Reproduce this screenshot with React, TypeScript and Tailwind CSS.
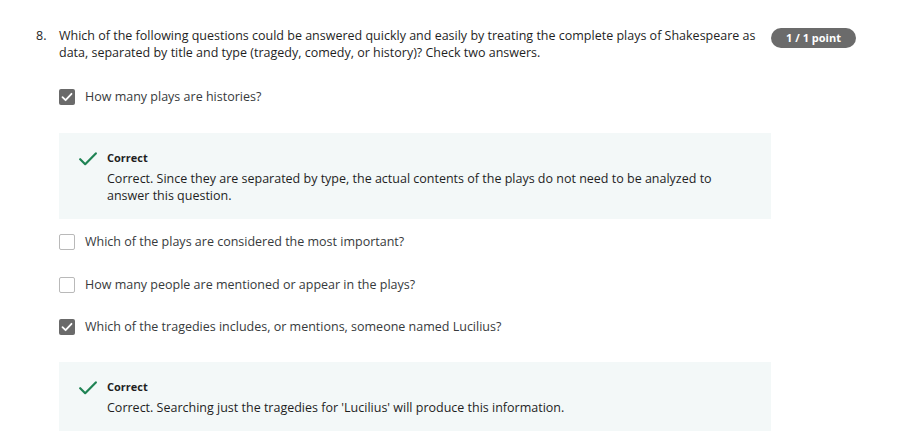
import React from 'react';

const font = { fontFamily: '"Open Sans", "Noto Sans", sans-serif' };

const CheckBox = ({ checked }: { checked: boolean }) =>
  checked ? (
    <span className="flex h-4 w-4 shrink-0 items-center justify-center rounded-[2px] bg-[#6a6a6a]">
      <svg width="12" height="10" viewBox="0 0 12 10" fill="none">
        <path d="M1.5 5.2 L4.6 8.2 L10.5 1.8" stroke="#fff" strokeWidth="1.8" strokeLinecap="round" strokeLinejoin="round" />
      </svg>
    </span>
  ) : (
    <span className="h-4 w-4 shrink-0 rounded-[2px] border border-[#b9b9b9] bg-white" />
  );

const Option = ({ checked, text, className }: { checked: boolean; text: string; className?: string }) => (
  <div className={`flex items-center gap-[10px] ${className ?? ''}`}>
    <CheckBox checked={checked} />
    <span className="text-[12.5px] leading-[18px] text-[#373a3c]">{text}</span>
  </div>
);

const Feedback = ({ lines, className }: { lines: string; className?: string }) => (
  <div className={`flex w-[712px] bg-[#f3f8f8] pl-5 ${className ?? ''}`}>
    <svg className="mt-[2px] shrink-0" width="18" height="14" viewBox="0 0 18 14" fill="none">
      <path d="M1.2 7.2 L6.2 12.2 L16.8 1.4" stroke="#1f8354" strokeWidth="2.2" strokeLinecap="round" strokeLinejoin="round" />
    </svg>
    <div className="ml-[10px] w-[620px]">
      <p className="text-[11px] font-bold leading-[15px] text-[#1f1f1f]">Correct</p>
      <p className="mt-[5px] text-[12.5px] leading-[17px] text-[#1f1f1f]">{lines}</p>
    </div>
  </div>
);

export default function App() {
  return (
    <div className="min-h-[439px] w-[924px] bg-white pl-9 pt-[27px]" style={font}>
      <div className="flex">
        <span className="w-[23px] text-[12.5px] leading-[18px] text-[#1f1f1f]">8.</span>
        <div className="flex flex-col">
          <div className="flex items-start">
            <p className="w-[705px] text-[12.5px] leading-[17px] text-[#1f1f1f]">
              Which of the following questions could be answered quickly and easily by treating the complete plays of Shakespeare as data, separated by title and type (tragedy, comedy, or history)? Check two answers.
            </p>
            <span className="ml-[7px] mt-[1px] flex h-5 w-[85px] items-center justify-center rounded-full bg-[#6b6b6b] text-[11px] font-bold text-white">
              1 / 1 point
            </span>
          </div>
          <Option className="mt-[27px]" checked text="How many plays are histories?" />
          <Feedback
            className="mt-[27px] h-[86px] pt-[17px]"
            lines="Correct. Since they are separated by type, the actual contents of the plays do not need to be analyzed to answer this question."
          />
          <Option className="mt-[14px]" checked={false} text="Which of the plays are considered the most important?" />
          <Option className="mt-[25px]" checked={false} text="How many people are mentioned or appear in the plays?" />
          <Option className="mt-[24px]" checked text="Which of the tragedies includes, or mentions, someone named Lucilius?" />
          <Feedback
            className="mt-[26px] h-[69px] pt-[17px]"
            lines="Correct. Searching just the tragedies for 'Lucilius' will produce this information."
          />
        </div>
      </div>
    </div>
  );
}
